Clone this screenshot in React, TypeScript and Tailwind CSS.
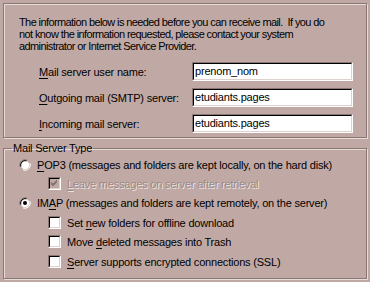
import React from 'react';

const face = 'bg-[#c0a9a5]';

const U: React.FC<{ children: React.ReactNode }> = ({ children }) => (
  <span className="underline underline-offset-[2px]">{children}</span>
);

const Field: React.FC<{ value: string }> = ({ value }) => (
  <div className="h-[19px] w-[161px] border border-t-[#8a7673] border-l-[#8a7673] border-b-white border-r-white">
    <div className="h-full border border-t-black border-l-black border-b-[#ddd0cd] border-r-[#ddd0cd] bg-white pl-[1px] leading-[15px] text-black">
      {value}
    </div>
  </div>
);

const Radio: React.FC<{ checked?: boolean }> = ({ checked }) => (
  <svg width="12" height="12" viewBox="0 0 12 12" className="shrink-0">
    <circle cx="6" cy="6" r="4.3" fill="#fff" />
    <path d="M11 4 A5.5 5.5 0 0 1 4 11" fill="none" stroke="#fff" strokeWidth="1" />
    <path d="M1 8 A5.5 5.5 0 0 1 8 1" fill="none" stroke="#8a7673" strokeWidth="1" />
    <path d="M1.8 7.5 A4.6 4.6 0 0 1 7.5 1.8" fill="none" stroke="#000" strokeWidth="1" />
    {checked && <circle cx="6" cy="6" r="2" fill="#000" />}
  </svg>
);

const Check: React.FC<{ checked?: boolean; disabled?: boolean }> = ({ checked, disabled }) => (
  <div className="h-[13px] w-[13px] shrink-0 border border-t-[#8a7673] border-l-[#8a7673] border-b-white border-r-white">
    <div
      className={`h-full border border-t-black border-l-black border-b-[#ddd0cd] border-r-[#ddd0cd] ${
        disabled ? face : 'bg-white'
      }`}
    >
      {checked && (
        <svg width="9" height="9" viewBox="0 0 9 9" className="block">
          <path d="M1 3 L3 5 L7 1 M1 4 L3 6 L7 2 M1 5 L3 7 L7 3" fill="none" stroke={disabled ? '#8a7673' : '#000'} strokeWidth="1" />
        </svg>
      )}
    </div>
  </div>
);

export default function App() {
  return (
    <div
      className={`h-[282px] w-[370px] overflow-hidden ${face} px-[3px] pt-[3px] text-[11px] leading-[12px] tracking-[-0.2px] text-black`}
      style={{ fontFamily: '"Liberation Sans", Arial, sans-serif' }}
    >
      <div className="h-[135px] border border-[#8a7673] shadow-[inset_1px_1px_0_#e6dcda,1px_1px_0_#e6dcda] pl-[15px] pr-[4px] pt-[12px]">
        <p className="whitespace-nowrap tracking-[-0.6px]">
          The information below is needed before you can receive mail.&nbsp; If you do
          <br />
          not know the information requested, please contact your system
          <br />
          administrator or Internet Service Provider.
        </p>
        <div className="mt-[10px] grid grid-cols-[153px_161px] items-center gap-y-[7px] pl-[20px]">
          <span>
            <U>M</U>ail server user name:
          </span>
          <Field value="prenom_nom" />
          <span>
            <U>O</U>utgoing mail (SMTP) server:
          </span>
          <Field value="etudiants.pages" />
          <span>
            <U>I</U>ncoming mail server:
          </span>
          <Field value="etudiants.pages" />
        </div>
      </div>

      <fieldset className="mt-[4px] h-[137px] border border-[#8a7673] shadow-[inset_1px_1px_0_#e6dcda,1px_1px_0_#e6dcda]">
        <legend className="ml-[8px] px-[1px]">Mail Server Type</legend>
        <div className="mt-[1px] flex flex-col pl-[15px]">
          <label className="flex h-[19px] items-center gap-[6px]">
            <Radio />
            <span>
              <U>P</U>OP3 (messages and folders are kept locally, on the hard disk)
            </span>
          </label>
          <label className="flex h-[19px] items-center gap-[6px] pl-[29px]">
            <Check checked disabled />
            <span className="text-[#9c8885] [text-shadow:1px_1px_0_#eee4e2]">
              <U>L</U>eave messages on server after retrieval
            </span>
          </label>
          <label className="flex h-[19px] items-center gap-[6px]">
            <Radio checked />
            <span>
              IM<U>A</U>P (messages and folders are kept remotely, on the server)
            </span>
          </label>
          <label className="mt-[1px] flex h-[19px] items-center gap-[6px] pl-[29px]">
            <Check />
            <span>
              Set <U>n</U>ew folders for offline download
            </span>
          </label>
          <label className="flex h-[19px] items-center gap-[6px] pl-[29px]">
            <Check />
            <span>
              Move <U>d</U>eleted messages into Trash
            </span>
          </label>
          <label className="mt-[1px] flex h-[19px] items-center gap-[6px] pl-[29px]">
            <Check />
            <span>
              <U>S</U>erver supports encrypted connections (SSL)
            </span>
          </label>
        </div>
      </fieldset>
    </div>
  );
}
